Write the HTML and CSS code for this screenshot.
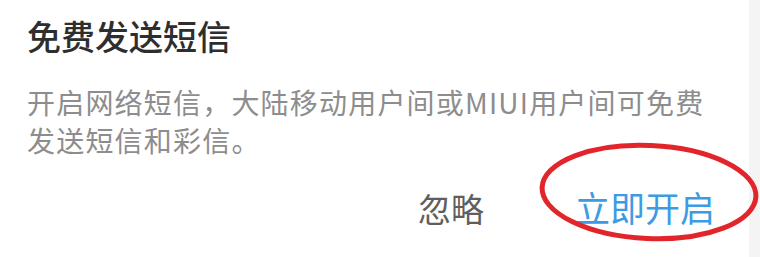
FILE: index.html
```html
<!DOCTYPE html>
<html lang="zh-CN">
<head>
<meta charset="utf-8">
<title>免费发送短信</title>
<link rel="stylesheet" href="styles.css">
</head>
<body>
<div class="screen">
  <div class="dialog">
    <h1 class="title">免费发送短信</h1>
    <p class="message">开启网络短信，大陆移动用户间或MIUI用户间可免费发送短信和彩信。</p>
    <div class="actions">
      <span class="btn btn-ignore">忽略</span>
      <span class="btn btn-primary">立即开启</span>
    </div>
  </div>
  <div class="side"></div>
  <svg class="mark" width="760" height="257" viewBox="0 0 760 257" aria-hidden="true">
    <ellipse cx="649" cy="192" rx="107" ry="46.5" transform="rotate(2.5 649 192)" fill="none" stroke="#e2252b" stroke-width="5"/>
  </svg>
</div>
</body>
</html>
```

FILE: styles.css
```css
* { box-sizing: border-box; }
html, body {
  margin: 0;
  padding: 0;
  background: #f4f4f4;
}
.screen {
  position: relative;
  width: 760px;
  height: 257px;
  display: flex;
  overflow: hidden;
  font-family: "Noto Sans CJK SC", "Noto Sans", sans-serif;
}
.dialog {
  width: 749px;
  height: 257px;
  background: #ffffff;
  padding: 16px 34px 0 27px;
  display: flex;
  flex-direction: column;
}
.side {
  flex: 1;
  background: #f4f4f4;
}
.title {
  margin: 0;
  font-size: 34px;
  line-height: 40px;
  font-weight: 500;
  color: #2e2e2e;
}
.message {
  margin: 27px 0 0 0;
  font-size: 28px;
  line-height: 38px;
  letter-spacing: 1.2px;
  color: #8d8d8d;
}
.actions {
  margin-top: 28px;
  display: flex;
  justify-content: flex-end;
  align-items: baseline;
  gap: 91px;
}
.btn {
  line-height: 40px;
}
.btn-ignore {
  font-size: 33px;
  color: #5e5e5e;
}
.btn-primary {
  font-size: 35px;
  color: #3d9be4;
}
.mark {
  position: absolute;
  left: 0;
  top: 0;
  pointer-events: none;
}
```
